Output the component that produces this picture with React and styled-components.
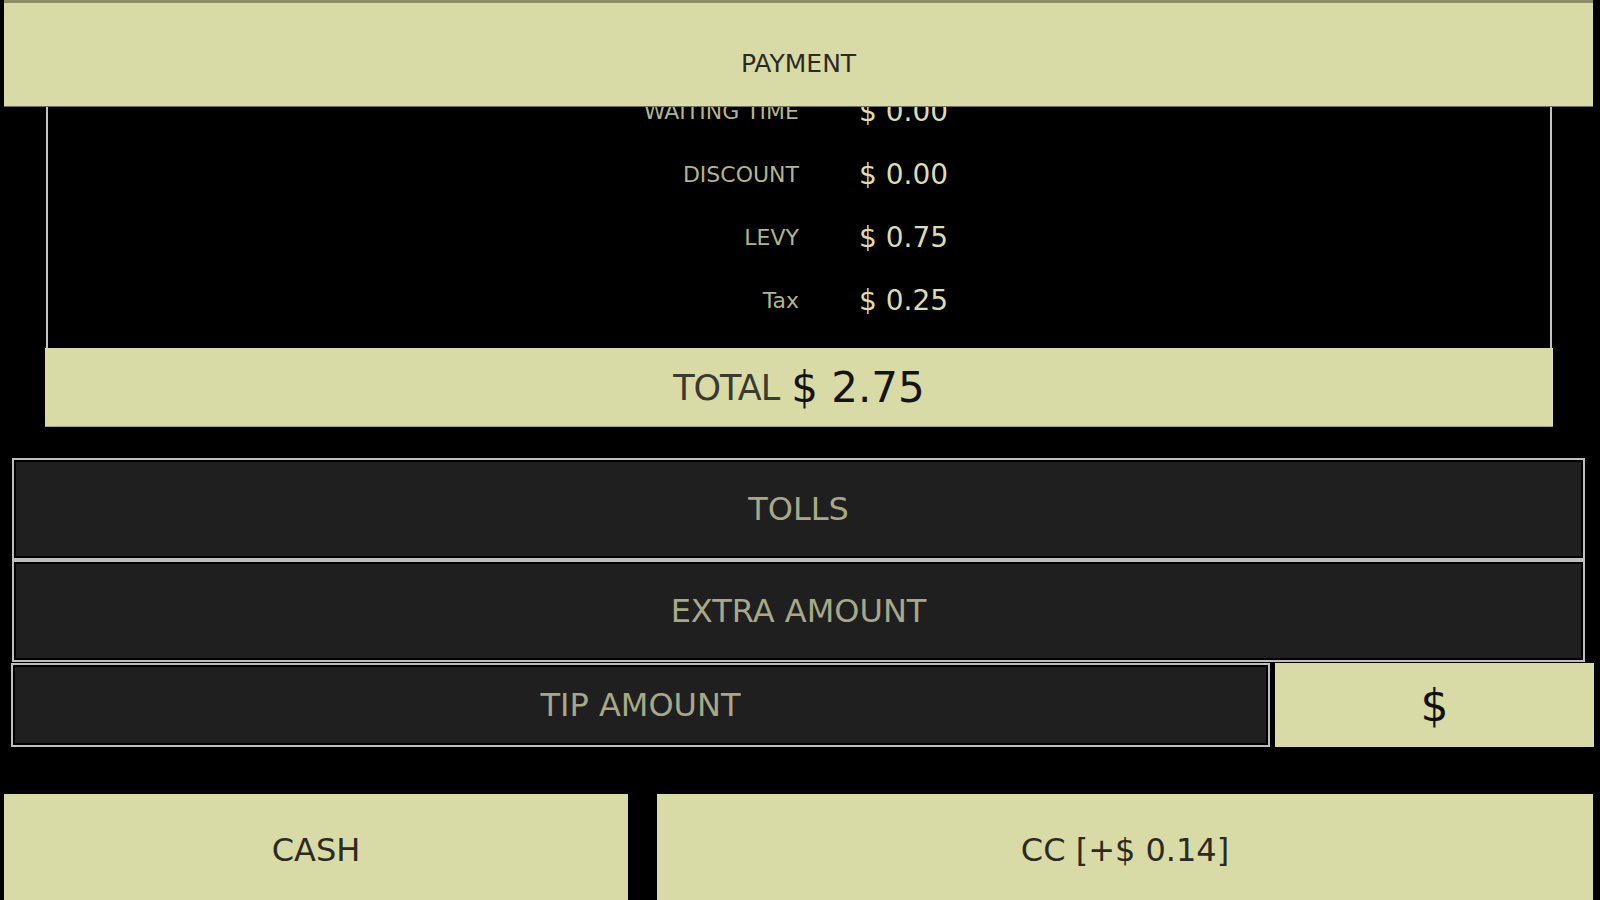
import React from "react";
import styled, { createGlobalStyle } from "styled-components";

const charges = [
  { id: "waiting", label: "WAITING TIME", value: "$ 0.00" },
  { id: "discount", label: "DISCOUNT", value: "$ 0.00" },
  { id: "levy", label: "LEVY", value: "$ 0.75" },
  { id: "tax", label: "Tax", value: "$ 0.25" },
];

function App() {
  return (
    <>
      <GlobalStyle />
      <Screen>
        <Header>PAYMENT</Header>

        <Summary>
          <ScrollView>
            <ChargeList $offset={40}>
              {charges.map(({ id, label, value }) => (
                <ChargeRow key={id}>
                  <ChargeLabel>{label}</ChargeLabel>
                  <ChargeValue>{value}</ChargeValue>
                </ChargeRow>
              ))}
            </ChargeList>
          </ScrollView>
          <TotalBar>
            <TotalLabel>TOTAL</TotalLabel>
            <TotalAmount>$ 2.75</TotalAmount>
          </TotalBar>
        </Summary>

        <ExtraButton $height={102} $first>
          TOLLS
        </ExtraButton>
        <ExtraButton $height={102}>EXTRA AMOUNT</ExtraButton>
        <TipRow>
          <TipButton>TIP AMOUNT</TipButton>
          <TipInput>$</TipInput>
        </TipRow>

        <PayRow>
          <PayButton>CASH</PayButton>
          <PayButton>CC [+$ 0.14]</PayButton>
        </PayRow>
      </Screen>
    </>
  );
}

const GlobalStyle = createGlobalStyle`
  html, body {
    margin: 0;
    padding: 0;
    background: #000;
  }
  body {
    font-family: "DejaVu Sans", "Liberation Sans", sans-serif;
  }
  * {
    box-sizing: border-box;
  }
`;

const Screen = styled.div`
  width: 1600px;
  height: 900px;
  overflow: hidden;
  display: flex;
  flex-direction: column;
  background: #000;
  & > * {
    flex-shrink: 0;
  }
`;

const Header = styled.header`
  position: relative;
  z-index: 1;
  height: 106px;
  margin: 0 7px 0 4px;
  padding-top: 17px;
  border-top: 3px solid #8e8e66;
  background: #d9dba6;
  box-shadow: 0 1px 0 #6f6f50;
  display: flex;
  align-items: center;
  justify-content: center;
  font-size: 25px;
  color: #2b2b24;
`;

const Summary = styled.section`
  margin: 0 47px 0 45px;
  display: flex;
  flex-direction: column;
`;

const ScrollView = styled.div`
  height: 242px;
  overflow: hidden;
`;

const ChargeList = styled.div`
  margin: -${({ $offset }) => $offset}px 1px 0;
  padding: 12px 0 16px;
  border: 2px solid #c4c4c4;
  border-bottom: none;
  background: #000;
`;

const ChargeRow = styled.div`
  height: 63px;
  display: grid;
  grid-template-columns: 1fr 1fr;
  align-items: center;
`;

const ChargeLabel = styled.span`
  justify-self: end;
  font-size: 22px;
  color: #b3b38e;
`;

const ChargeValue = styled.span`
  padding-left: 60px;
  font-size: 28px;
  color: #dcdcb2;
`;

const TotalBar = styled.div`
  height: 79px;
  background: #d9dba6;
  box-shadow: inset 0 -1px 0 #a5a67a;
  display: flex;
  align-items: center;
  justify-content: center;
  gap: 12px;
`;

const TotalLabel = styled.span`
  font-size: 35px;
  color: #3a3a30;
  letter-spacing: -1px;
`;

const TotalAmount = styled.span`
  font-size: 42px;
  color: #141414;
`;

const darkButton = `
  display: flex;
  align-items: center;
  justify-content: center;
  border: 2px solid #bdbdbd;
  box-shadow: inset 0 0 0 2px #000;
  background: #1f1f1f;
  font-size: 32px;
  color: #a8a888;
`;

const ExtraButton = styled.div`
  ${darkButton}
  height: ${({ $height }) => $height}px;
  margin: ${({ $first }) => ($first ? "31px" : "0")} 15px 0 12px;
`;

const TipRow = styled.div`
  height: 84px;
  margin-top: 1px;
  padding: 0 6px 0 11px;
  display: flex;
  gap: 5px;
`;

const TipButton = styled.div`
  ${darkButton}
  flex: 1;
`;

const TipInput = styled.div`
  width: 319px;
  display: flex;
  align-items: center;
  justify-content: center;
  background: #d9dba6;
  font-size: 44px;
  color: #111;
`;

const PayRow = styled.div`
  height: 112px;
  margin-top: 47px;
  padding: 0 7px 0 4px;
  display: grid;
  grid-template-columns: 624px 1fr;
  gap: 29px;
`;

const PayButton = styled.div`
  display: flex;
  align-items: center;
  justify-content: center;
  background: #d9dba6;
  font-size: 32px;
  color: #2b2b24;
`;

export default App;
